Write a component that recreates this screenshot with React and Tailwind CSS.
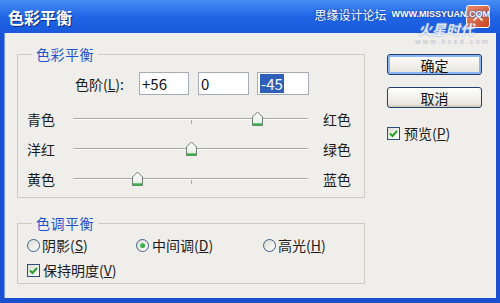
import React from "react";

const font = "font-['Noto_Sans_CJK_SC','Noto_Sans',sans-serif]";

function Thumb({ left }) {
  return (
    <svg
      className="absolute top-1/2 -translate-y-1/2"
      style={{ left }}
      width="13"
      height="16"
      viewBox="0 0 13 16"
    >
      <defs>
        <linearGradient id="tg" x1="0" y1="0" x2="0" y2="1">
          <stop offset="0" stopColor="#ffffff" />
          <stop offset="1" stopColor="#e3ede4" />
        </linearGradient>
      </defs>
      <path d="M1.5 6 L6.5 1 L11.5 6 L11.5 14.5 L1.5 14.5 Z" fill="url(#tg)" stroke="#6f7d73" />
      <rect x="2" y="12.3" width="9" height="2.2" fill="#39b04a" />
    </svg>
  );
}

function SliderRow({ left, right, thumb, tick }) {
  return (
    <div className="flex h-[30px] items-center">
      <div className="w-[46px] text-[14px] leading-none text-[#1b1b1b]">{left}</div>
      <div className="relative h-full w-[235px]">
        <div className="absolute left-0 right-0 top-1/2 h-[2px] -translate-y-1/2 rounded-full border-t border-[#a9a9a4] bg-white" />
        {tick && <div className="absolute left-[118px] top-[16px] h-[4px] w-px bg-[#a9a9a4]" />}
        <Thumb left={thumb} />
      </div>
      <div className="ml-[15px] text-[14px] leading-none text-[#1b1b1b]">{right}</div>
    </div>
  );
}

function Input({ children, w }) {
  return (
    <div
      className={`flex h-[23px] items-center border border-[#a5acb5] bg-white pl-[2px] text-[15px] leading-none text-[#111] ${w}`}
    >
      {children}
    </div>
  );
}

function Radio({ checked }) {
  return (
    <div className="flex h-[13px] w-[13px] items-center justify-center rounded-full border border-[#3f5f86] bg-gradient-to-br from-[#dcdcd4] to-white">
      {checked && <div className="h-[5px] w-[5px] rounded-full bg-gradient-to-br from-[#5fd06a] to-[#22922c]" />}
    </div>
  );
}

function Check() {
  return (
    <div className="flex h-[13px] w-[13px] items-center justify-center border border-[#2a4f7c] bg-gradient-to-br from-[#dcdcd4] to-white">
      <svg width="9" height="9" viewBox="0 0 9 9">
        <path d="M1 4.5 L3.5 7 L8 1.8" fill="none" stroke="#21a121" strokeWidth="2" />
      </svg>
    </div>
  );
}

function Button({ children, isDefault }) {
  return (
    <div
      className={`flex h-[21px] w-[95px] items-center justify-center rounded-[3px] border border-[#1f3f6f] bg-gradient-to-b from-white to-[#e4e2d8] text-[14px] leading-none text-[#111] ${
        isDefault ? "shadow-[inset_0_0_0_2px_#8cb4f2]" : "shadow-[inset_0_-2px_0_#d6d0bf]"
      }`}
    >
      {children}
    </div>
  );
}

export default function App() {
  return (
    <div className={`relative flex h-[303px] w-[500px] flex-col bg-[#1b50d0] ${font}`}>
      {/* Title bar */}
      <div className="flex h-[33px] items-center bg-gradient-to-b from-[#4a8df5] via-[#2066e6] to-[#1a58dc] px-[8px]">
        <span className="text-[16px] font-bold leading-none text-white [text-shadow:1px_1px_0_#0a2a80]">色彩平衡</span>
        <div className="ml-auto mr-[2px] flex h-[23px] w-[24px] items-center justify-center rounded-[3px] border border-white bg-gradient-to-br from-[#e88a6a] to-[#c9441f] text-[15px] font-bold text-white">
          ×
        </div>
      </div>

      {/* Body */}
      <div className="mx-[4px] mb-[5px] flex flex-1 border-l border-[#6f97e8] bg-[#efeeea] pl-[12px] pt-[21px]">
        {/* Left column */}
        <div className="flex w-[348px] flex-col">
          {/* Group 1 */}
          <div className="relative h-[144px] border border-[#cfcdc2] pl-[9px] pt-[17px]">
            <span className="absolute left-[14px] top-[-10px] bg-[#efeeea] px-[4px] text-[14px] leading-[18px] tracking-[0.5px] text-[#1d55c8]">
              色彩平衡
            </span>
            <div className="flex h-[23px] items-center">
              <div className="ml-[48px] w-[64px] text-[14px] leading-none text-[#1b1b1b]">色阶(<span className="underline">L</span>):</div>
              <Input w="w-[50px]">+56</Input>
              <div className="w-[9px]" />
              <Input w="w-[51px]">0</Input>
              <div className="w-[8px]" />
              <Input w="w-[52px]">
                <span className="bg-[#2f5fb8] px-[1px] py-[2px] text-white">-45</span>
              </Input>
            </div>
            <div className="mt-[9px] flex flex-col">
              <SliderRow left="青色" right="红色" thumb={178} tick />
              <SliderRow left="洋红" right="绿色" thumb={112} />
              <SliderRow left="黄色" right="蓝色" thumb={58} tick />
            </div>
          </div>

          {/* Group 2 */}
          <div className="relative mt-[25px] h-[61px] border border-[#cfcdc2] pl-[9px] pt-[11px]">
            <span className="absolute left-[14px] top-[-10px] bg-[#efeeea] px-[4px] text-[14px] leading-[18px] tracking-[0.5px] text-[#1d55c8]">
              色调平衡
            </span>
            <div className="flex h-[20px] items-center text-[14px] leading-none text-[#1b1b1b]">
              <div className="flex w-[109px] items-center gap-[2px]">
                <Radio />
                <span>阴影(<span className="underline">S</span>)</span>
              </div>
              <div className="flex w-[127px] items-center gap-[3px]">
                <Radio checked />
                <span>中间调(<span className="underline">D</span>)</span>
              </div>
              <div className="flex items-center gap-[2px]">
                <Radio />
                <span>高光(<span className="underline">H</span>)</span>
              </div>
            </div>
            <div className="mt-[5px] flex h-[20px] items-center gap-[3px] text-[14px] leading-none text-[#1b1b1b]">
              <Check />
              <span>保持明度(<span className="underline">V</span>)</span>
            </div>
          </div>
        </div>

        {/* Right column */}
        <div className="ml-[22px] flex flex-col">
          <Button isDefault>确定</Button>
          <div className="h-[12px]" />
          <Button>取消</Button>
          <div className="mt-[18px] flex items-center gap-[4px] text-[14px] leading-none text-[#1b1b1b]">
            <Check />
            <span>预览(<span className="underline">P</span>)</span>
          </div>
        </div>
      </div>

      {/* Watermark overlay */}
      <div className="pointer-events-none absolute right-[10px] top-[8px] flex flex-col items-end whitespace-nowrap">
        <div className="flex h-[13px] items-center gap-[5px] leading-none text-white [text-shadow:0_0_2px_#1a3fa0,0_0_1px_#1a3fa0]">
          <span className="text-[12px]">思缘设计论坛</span>
          <span className="font-['Liberation_Sans',sans-serif] text-[9px] font-bold">WWW.MISSYUAN.COM</span>
        </div>
        <div className="mr-[16px] mt-[1px] h-[14px] text-[14px] font-bold italic leading-[14px] text-white/80 [text-shadow:0_0_2px_#7a9ad0]">
          火星时代
        </div>
        <div className="mt-[2px] h-[7px] font-['Liberation_Sans',sans-serif] text-[7px] font-bold leading-[7px] tracking-[2px] text-[#c9cfd8]">
          www.hxsd.com
        </div>
      </div>
    </div>
  );
}
